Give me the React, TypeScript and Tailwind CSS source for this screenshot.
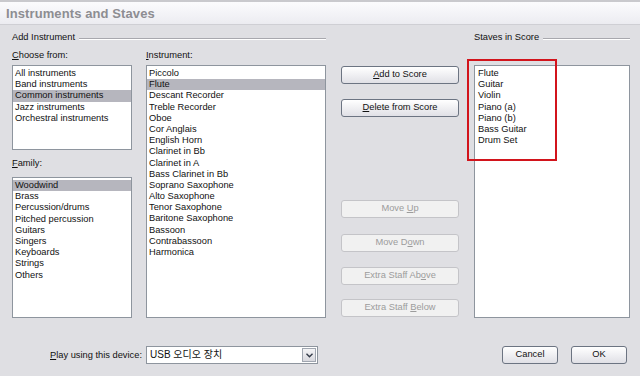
import React from "react";

const chooseFrom = ["All instruments", "Band instruments", "Common instruments", "Jazz instruments", "Orchestral instruments"];
const families = ["Woodwind", "Brass", "Percussion/drums", "Pitched percussion", "Guitars", "Singers", "Keyboards", "Strings", "Others"];
const instruments = [
  "Piccolo",
  "Flute",
  "Descant Recorder",
  "Treble Recorder",
  "Oboe",
  "Cor Anglais",
  "English Horn",
  "Clarinet in Bb",
  "Clarinet in A",
  "Bass Clarinet in Bb",
  "Soprano Saxophone",
  "Alto Saxophone",
  "Tenor Saxophone",
  "Baritone Saxophone",
  "Bassoon",
  "Contrabassoon",
  "Harmonica",
];
const staves = ["Flute", "Guitar", "Violin", "Piano (a)", "Piano (b)", "Bass Guitar", "Drum Set"];

function ListBox({ items, selected, className }: { items: string[]; selected?: string; className: string }) {
  return (
    <div className={`border border-[#8e959e] bg-white pt-[2px] ${className}`}>
      {items.map((item) => (
        <div
          key={item}
          className={`h-[11.2px] pl-[2px] leading-[11.2px] whitespace-nowrap ${item === selected ? "bg-[#b6b6be]" : ""}`}
        >
          {item}
        </div>
      ))}
    </div>
  );
}

// label with the keyboard-access letter underlined
function Mnemonic({ text, at }: { text: string; at: number }) {
  return (
    <span className="whitespace-pre">
      {text.slice(0, at)}
      <span className="underline underline-offset-[1px]">{text[at]}</span>
      {text.slice(at + 1)}
    </span>
  );
}

function Button({ children, disabled, className = "" }: { children: React.ReactNode; disabled?: boolean; className?: string }) {
  return (
    <div
      className={`flex h-[18px] items-center justify-center rounded-[3px] border ${
        disabled
          ? "border-[#c4c4c8] bg-[#f1f1f1] text-[#9c9c9c]"
          : "border-[#6c7482] bg-gradient-to-b from-white to-[#e0e0e6] text-[#111]"
      } ${className}`}
    >
      {children}
    </div>
  );
}

function GroupHeader({ title, className = "" }: { title: string; className?: string }) {
  return (
    <div className={`flex h-[11px] items-center gap-[4px] ${className}`}>
      <span className="leading-[11px] whitespace-nowrap">{title}</span>
      <div className="mt-[2px] h-[2px] flex-1 border-t border-b border-t-[#a8a8ae] border-b-white" />
    </div>
  );
}

export default function App() {
  return (
    <div
      className="relative flex h-[376px] w-[640px] flex-col overflow-hidden bg-[#dfdfe3] text-[9.3px] text-[#111]"
      style={{ fontFamily: '"Liberation Sans", "Noto Sans CJK KR", sans-serif' }}
    >
      {/* Title bar */}
      <div className="flex h-[24px] items-center border-t-2 border-[#c9c9cd] bg-gradient-to-b from-[#fbfbfd] to-[#ececf1] px-[6px] shadow-[0_1px_0_#cfcfd4]">
        <span className="text-[13px] font-bold leading-none text-[#8d8d92] tracking-[0.1px]">Instruments and Staves</span>
      </div>

      <div className="flex pl-[12px] pt-[8px]">
        {/* Add Instrument */}
        <div className="flex w-[314px] flex-col">
          <GroupHeader title="Add Instrument" />
          <div className="mt-[7px] flex gap-[14px]">
            <div className="flex w-[120px] flex-col">
              <div className="h-[11px] leading-[11px]">
                <Mnemonic text="Choose from:" at={0} />
              </div>
              <ListBox items={chooseFrom} selected="Common instruments" className="mt-[4px] h-[85px]" />
              <div className="mt-[8px] h-[11px] leading-[11px]">
                <Mnemonic text="Family:" at={0} />
              </div>
              <ListBox items={families} selected="Woodwind" className="mt-[8px] h-[141px]" />
            </div>
            <div className="flex w-[180px] flex-col">
              <div className="h-[11px] leading-[11px]">
                <Mnemonic text="Instrument:" at={0} />
              </div>
              <ListBox items={instruments} selected="Flute" className="mt-[4px] h-[253px]" />
            </div>
          </div>
        </div>

        {/* Buttons */}
        <div className="ml-[15px] flex w-[118px] flex-col pt-[34px]">
          <Button>
            <Mnemonic text="Add to Score" at={0} />
          </Button>
          <Button className="mt-[15px]">
            <Mnemonic text="Delete from Score" at={0} />
          </Button>
          <Button disabled className="mt-[83px]">
            <Mnemonic text="Move Up" at={5} />
          </Button>
          <Button disabled className="mt-[16px]">
            <Mnemonic text="Move Down" at={6} />
          </Button>
          <Button disabled className="mt-[15px]">
            <Mnemonic text="Extra Staff Above" at={14} />
          </Button>
          <Button disabled className="mt-[14px]">
            <Mnemonic text="Extra Staff Below" at={12} />
          </Button>
        </div>

        {/* Staves in Score */}
        <div className="ml-[15px] flex w-[156px] flex-col">
          <GroupHeader title="Staves in Score" />
          <ListBox items={staves} className="mt-[22px] h-[253px] pl-[1px]" />
        </div>
      </div>

      {/* Bottom row */}
      <div className="mt-[28px] flex h-[18px] items-center">
        <div className="ml-[50px] w-[96px] leading-[11px]">
          <Mnemonic text="Play using this device:" at={0} />
        </div>
        <div className="flex h-[18px] w-[172px] items-center border border-[#8e959e] bg-white pl-[3px] pr-[1px]">
          <span className="flex-1 text-[10px] leading-none">USB 오디오 장치</span>
          <div className="flex h-[14px] w-[14px] items-center justify-center border border-[#a0a6b0] bg-gradient-to-b from-[#f4f4f6] to-[#d8d8de]">
            <svg width="7" height="5" viewBox="0 0 7 5">
              <path d="M0.5 0.8 L3.5 3.8 L6.5 0.8" fill="none" stroke="#333a48" strokeWidth="1.4" />
            </svg>
          </div>
        </div>
        <Button className="ml-[184px] w-[56px]">Cancel</Button>
        <Button className="ml-[13px] w-[56px]">OK</Button>
      </div>

      {/* annotation box */}
      <div className="absolute left-[467px] top-[59px] h-[102px] w-[90px] border-2 border-[#d2141c]" />
    </div>
  );
}
